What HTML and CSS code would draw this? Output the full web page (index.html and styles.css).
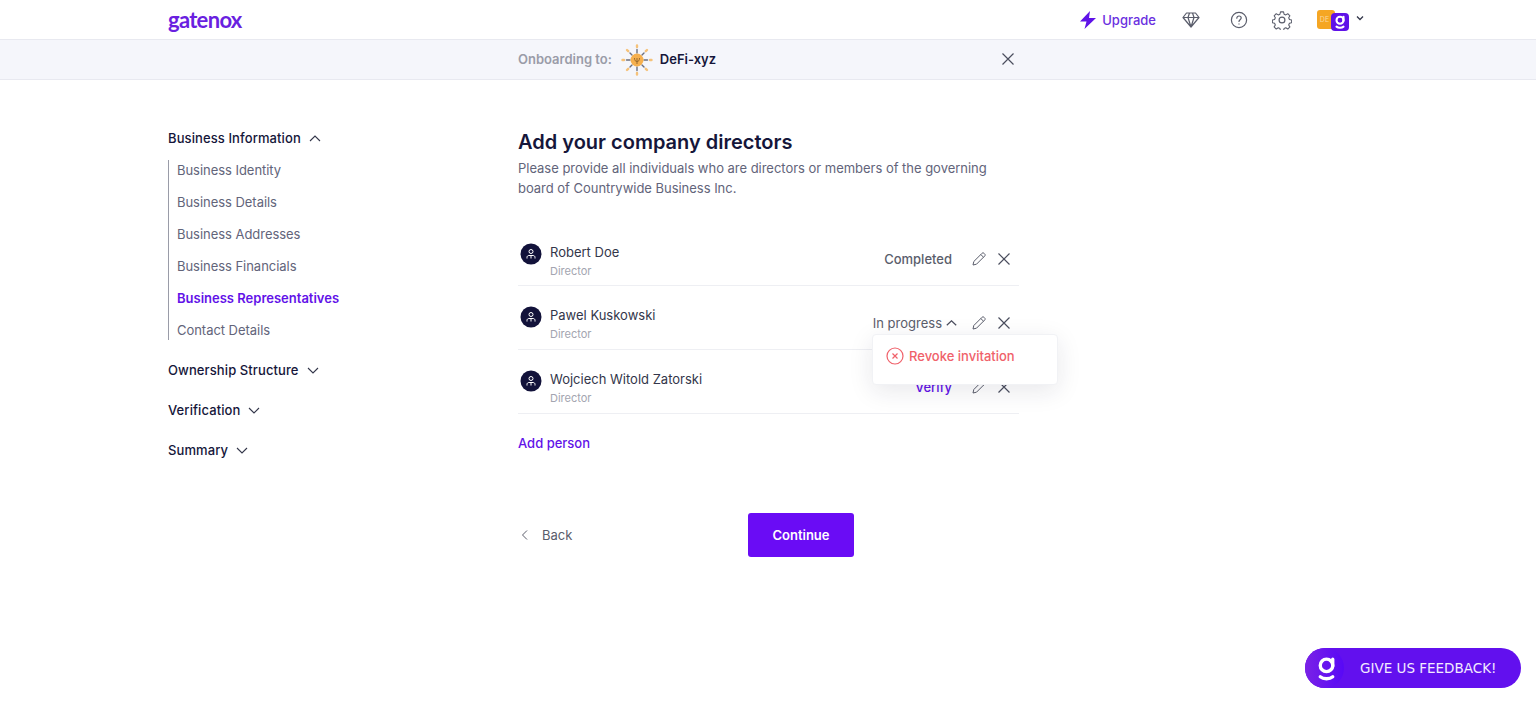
FILE: index.html
```html
<!DOCTYPE html>
<html lang="en">
<head>
  <meta charset="UTF-8">
  <meta name="viewport" content="width=device-width, initial-scale=1.0">
  <title>Gatenox onboarding</title>
  <link rel="stylesheet" href="styles.css">
</head>
<body>
  <header class="topbar">
    <div class="logo">gatenox</div>
    <nav class="topnav">
      <a class="upgrade">
        <svg width="18" height="20" viewBox="0 0 18 20"><path d="M11 1 1 11.500h6.500L5.500 19 17 8h-7z" fill="#5f12e8"/></svg>
        Upgrade
      </a>
      <svg class="nav-diamond" width="18" height="16" viewBox="0 0 18 16" fill="none" stroke="#5a5d6b" stroke-width="1.200" stroke-linejoin="round"><path d="M4.500 1h9L17 5.500 9 15 1 5.500zM1 5.500h16M6 5.500 9 15l3-9.500M6 5.500 7.500 1M12 5.500 10.500 1"/></svg>
      <svg class="nav-help" width="18" height="18" viewBox="0 0 18 18" fill="none" stroke="#5a5d6b" stroke-width="1.200"><circle cx="9" cy="9" r="7.600"/><path d="M6.800 7.200c0-1.300 1-2.200 2.200-2.200s2.200.9 2.200 2c0 1.700-2.200 1.800-2.200 3.500" stroke-linecap="round"/><path d="M9 12.500v1"/></svg>
      <svg class="nav-gear" width="20" height="20" viewBox="0 0 24 24" fill="none" stroke="#5a5d6b" stroke-width="1.400" stroke-linejoin="round"><circle cx="12" cy="12" r="3.500"/><path d="M10 1.500h4l.7 3 2.300 1 2.600-1.600 2.800 2.800-1.600 2.600 1 2.300 2.900.7v3.400l-2.900.7-1 2.300 1.600 2.600-2.800 2.800-2.600-1.600-2.300 1-.7 2.900h-4l-.7-2.900-2.300-1-2.600 1.600-2.800-2.800 1.600-2.600-1-2.300-2.900-.7v-3.400l2.900-.7 1-2.300-1.600-2.600 2.800-2.800 2.600 1.600 2.300-1z" transform="translate(1.100 .9) scale(.91)"/></svg>
      <div class="account">
        <div class="account-org">DE</div>
        <div class="account-me">
          <svg width="12" height="14" viewBox="0 0 20 24" fill="none" stroke="#fff" stroke-width="3.600" stroke-linecap="round"><circle cx="10" cy="9" r="6"/><path d="M16 3v7M4 20c3 2.500 9 2.500 12 0"/></svg>
        </div>
        <svg class="account-caret" width="8" height="6" viewBox="0 0 8 6" fill="none" stroke="#33364a" stroke-width="1.300"><path d="m1 1.500 3 3 3-3"/></svg>
      </div>
    </nav>
  </header>

  <div class="subbar">
    <div class="subbar-inner">
      <span class="onboarding-label">Onboarding to:</span>
      <svg class="defi-logo" width="32" height="32" viewBox="0 0 32 32">
        <g stroke="#f5c27a" stroke-width="2.400" stroke-linecap="round">
          <path d="M16 1.500v1.500M16 29v1.500M1.500 16H3M29 16h1.500M6 6l1.200 1.200M24.800 24.800 26 26M26 6l-1.200 1.200M6 26l1.200-1.200"/>
        </g>
        <g stroke="#6b6e7c" stroke-width="1.400" stroke-linecap="round">
          <path d="M16 5.500V9M16 23v3.500M5.500 16H9M23 16h3.500M9 9l2 2M21 21l2 2M23 9l-2 2M9 23l2-2"/>
        </g>
        <circle cx="16" cy="16" r="6.500" fill="#f6b04e"/>
        <path d="M13.500 14c0 2.500 1 3.500 2.500 3.500s2.500-1 2.500-3.500M16 14v6" stroke="#9a6a2c" stroke-width="1" fill="none"/>
      </svg>
      <span class="defi-name">DeFi-xyz</span>
      <svg class="subbar-close" width="12" height="12" viewBox="0 0 12 12" stroke="#4b4e5e" stroke-width="1.200"><path d="m.5.500 11 11M11.500.500l-11 11"/></svg>
    </div>
  </div>

  <main class="page">
    <aside class="sidebar">
      <div class="side-head">Business Information
        <svg width="12" height="7" viewBox="0 0 12 7" fill="none" stroke="#33364a" stroke-width="1.100"><path d="m1 6 5-5 5 5"/></svg>
      </div>
      <ul class="side-list">
        <li>Business Identity</li>
        <li>Business Details</li>
        <li>Business Addresses</li>
        <li>Business Financials</li>
        <li class="active">Business Representatives</li>
        <li>Contact Details</li>
      </ul>
      <div class="side-head">Ownership Structure
        <svg width="12" height="7" viewBox="0 0 12 7" fill="none" stroke="#33364a" stroke-width="1.100"><path d="m1 1 5 5 5-5"/></svg>
      </div>
      <div class="side-head">Verification
        <svg width="12" height="7" viewBox="0 0 12 7" fill="none" stroke="#33364a" stroke-width="1.100"><path d="m1 1 5 5 5-5"/></svg>
      </div>
      <div class="side-head">Summary
        <svg width="12" height="7" viewBox="0 0 12 7" fill="none" stroke="#33364a" stroke-width="1.100"><path d="m1 1 5 5 5-5"/></svg>
      </div>
    </aside>

    <section class="content">
      <h1>Add your company directors</h1>
      <p class="intro">Please provide all individuals who are directors or members of the governing board of Countrywide Business Inc.</p>

      <div class="people">
        <div class="person person-first">
          <svg class="avatar" width="22" height="22" viewBox="0 0 22 22"><circle cx="11" cy="11" r="10.500" fill="#12123a"/><g fill="none" stroke="#fff" stroke-width="1"><circle cx="11" cy="8.500" r="2"/><path d="M7 15.500v-1c0-1.500 1-2 2-2h4c1 0 2 .5 2 2v1M11 12.500v3"/></g></svg>
          <div class="person-text">
            <div class="person-name">Robert Doe</div>
            <div class="person-role">Director</div>
          </div>
          <span class="status">Completed</span>
          <svg class="edit" width="14" height="14" viewBox="0 0 14 14" fill="none" stroke="#5a5d6b" stroke-width="1"><path d="M1 13l.8-3.500L10 1.300c.6-.6 1.500-.6 2 0l.7.700c.6.6.6 1.400 0 2L4.500 12.200zM8.800 2.500l2.700 2.700"/></svg>
          <svg class="remove" width="12" height="12" viewBox="0 0 12 12" stroke="#4b4e5e" stroke-width="1.200"><path d="m.5.500 11 11M11.500.500l-11 11"/></svg>
        </div>

        <div class="person">
          <svg class="avatar" width="22" height="22" viewBox="0 0 22 22"><circle cx="11" cy="11" r="10.500" fill="#12123a"/><g fill="none" stroke="#fff" stroke-width="1"><circle cx="11" cy="8.500" r="2"/><path d="M7 15.500v-1c0-1.500 1-2 2-2h4c1 0 2 .5 2 2v1M11 12.500v3"/></g></svg>
          <div class="person-text">
            <div class="person-name">Pawel Kuskowski</div>
            <div class="person-role">Director</div>
          </div>
          <span class="status status-open">In progress
            <svg width="11" height="6" viewBox="0 0 11 6" fill="none" stroke="#4b4e5e" stroke-width="1.200"><path d="m.8 5.300 4.700-4.500 4.700 4.500"/></svg>
          </span>
          <svg class="edit" width="14" height="14" viewBox="0 0 14 14" fill="none" stroke="#5a5d6b" stroke-width="1"><path d="M1 13l.8-3.500L10 1.300c.6-.6 1.500-.6 2 0l.7.700c.6.6.6 1.400 0 2L4.500 12.200zM8.800 2.500l2.700 2.700"/></svg>
          <svg class="remove" width="12" height="12" viewBox="0 0 12 12" stroke="#4b4e5e" stroke-width="1.200"><path d="m.5.500 11 11M11.500.500l-11 11"/></svg>
          <div class="popup">
            <svg width="18" height="18" viewBox="0 0 18 18" fill="none" stroke="#f0616a" stroke-width="1.200"><circle cx="9" cy="9" r="8"/><path d="m6.500 6.500 5 5M11.500 6.500l-5 5"/></svg>
            Revoke invitation
          </div>
        </div>

        <div class="person">
          <svg class="avatar" width="22" height="22" viewBox="0 0 22 22"><circle cx="11" cy="11" r="10.500" fill="#12123a"/><g fill="none" stroke="#fff" stroke-width="1"><circle cx="11" cy="8.500" r="2"/><path d="M7 15.500v-1c0-1.500 1-2 2-2h4c1 0 2 .5 2 2v1M11 12.500v3"/></g></svg>
          <div class="person-text">
            <div class="person-name">Wojciech Witold Zatorski</div>
            <div class="person-role">Director</div>
          </div>
          <span class="status status-verify">Verify</span>
          <svg class="edit" width="14" height="14" viewBox="0 0 14 14" fill="none" stroke="#5a5d6b" stroke-width="1"><path d="M1 13l.8-3.500L10 1.300c.6-.6 1.500-.6 2 0l.7.700c.6.6.6 1.400 0 2L4.500 12.200zM8.800 2.500l2.700 2.700"/></svg>
          <svg class="remove" width="12" height="12" viewBox="0 0 12 12" stroke="#4b4e5e" stroke-width="1.200"><path d="m.5.500 11 11M11.500.500l-11 11"/></svg>
        </div>
      </div>

      <a class="add-person">Add person</a>

      <div class="actions">
        <a class="back">
          <svg width="7" height="10" viewBox="0 0 7 10" fill="none" stroke="#5a5d6b" stroke-width="1"><path d="M6 .5 1.500 5 6 9.500"/></svg>
          Back
        </a>
        <button class="continue">Continue</button>
      </div>
    </section>
  </main>

  <button class="feedback">
    <span class="feedback-logo">
      <svg width="21" height="25" viewBox="0 0 20 24" fill="none" stroke="#fff" stroke-width="3.200" stroke-linecap="round"><circle cx="10" cy="9" r="6"/><path d="M16 3v7M4 20c3 2.500 9 2.500 12 0"/></svg>
    </span>
    GIVE US FEEDBACK!
  </button>
</body>
</html>
```

FILE: styles.css
```css
* {
  margin: 0;
  padding: 0;
  box-sizing: border-box;
}
body {
  font-family: Inter, "Liberation Sans", sans-serif;
  font-size: 13px;
  color: #15163a;
  background: #ffffff;
  height: 703px;
  overflow: hidden;
  position: relative;
}
.topbar {
  height: 40px;
  border-bottom: 1px solid #e8e9f0;
  padding: 0 171px 0 168px;
  display: flex;
  align-items: center;
  justify-content: space-between;
}
.logo {
  font-family: Lato, sans-serif;
  font-size: 22px;
  font-weight: 700;
  letter-spacing: -0.7px;
  color: #6a1fe0;
  line-height: 40px;
}
.topnav {
  display: flex;
  align-items: center;
}
.upgrade {
  display: flex;
  align-items: center;
  gap: 5px;
  color: #6a2fe0;
  font-weight: 500;
}
.nav-diamond {
  margin-left: 26px;
}
.nav-help {
  margin-left: 30px;
}
.nav-gear {
  margin-left: 24px;
}
.account {
  margin-left: 25px;
  width: 48px;
  height: 24px;
  position: relative;
}
.account-org {
  position: absolute;
  left: 0;
  top: 2px;
  width: 18px;
  height: 19px;
  border-radius: 3px;
  background: #f5a623;
  color: #fbd9a0;
  font-size: 7px;
  line-height: 19px;
  padding-right: 3px;
  text-align: center;
}
.account-me {
  position: absolute;
  left: 14px;
  top: 5px;
  width: 18px;
  height: 18px;
  border-radius: 4px;
  background: #5f12e8;
  display: flex;
  align-items: center;
  justify-content: center;
}
.account-caret {
  position: absolute;
  left: 39px;
  top: 7px;
}
.subbar {
  height: 40px;
  background: #f5f6fb;
  border-bottom: 1px solid #e8e9f0;
  padding-left: 518px;
}
.subbar-inner {
  width: 496px;
  height: 38px;
  display: flex;
  align-items: center;
}
.onboarding-label {
  color: #9a9ca8;
  font-weight: 600;
}
.defi-logo {
  margin-left: 9px;
  margin-top: 2px;
}
.defi-name {
  margin-left: 7px;
  font-weight: 600;
}
.subbar-close {
  margin-left: auto;
}
.page {
  display: flex;
  padding: 50px 0 0 168px;
}
.sidebar {
  width: 350px;
}
.side-head {
  height: 16px;
  line-height: 16px;
  font-weight: 500;
  letter-spacing: 0.1px;
  margin-bottom: 24px;
  color: #15163a;
  display: flex;
  align-items: center;
  gap: 8px;
}
.side-list {
  display: flow-root;
  list-style: none;
  border-left: 1px solid #9a9ca8;
  height: 180px;
  margin: -10px 0 22px 0;
  padding-left: 8px;
}
.side-list li {
  height: 32px;
  line-height: 32px;
  color: #62647a;
  letter-spacing: -0.04px;
}
.side-list li:first-child {
  margin-top: -6px;
}
.side-list .active {
  color: #6212e8;
  font-weight: 600;
  letter-spacing: 0;
}
.content {
  width: 501px;
}
h1 {
  font-size: 20px;
  font-weight: 600;
  line-height: 24px;
  color: #15163a;
}
.intro {
  margin-top: 4px;
  line-height: 20px;
  color: #62647a;
  letter-spacing: -0.025px;
  width: 480px;
}
.people {
  margin-top: 25px;
}
.person {
  height: 64px;
  border-bottom: 1px solid #eeeff3;
  display: flex;
  align-items: center;
  position: relative;
  padding: 10px 9px 0 2px;
}
.person-first {
  height: 63px;
}
.avatar {
  margin-top: -11px;
  flex: none;
}
.person-text {
  margin-left: 8px;
  margin-top: 3px;
  flex: 1;
}
.person-name {
  line-height: 18px;
  color: #33364a;
}
.person-role {
  margin-top: 2px;
  font-size: 11px;
  line-height: 16px;
  color: #a3a5b0;
}
.status {
  color: #5a5d6b;
  font-weight: 500;
}
.status-open {
  display: flex;
  align-items: center;
  gap: 4px;
  margin-right: -5px;
  font-weight: 400;
}
.status-verify {
  color: #6212e8;
  font-weight: 500;
}
.edit {
  margin-left: 20px;
}
.remove {
  margin-left: 12px;
}
.popup {
  position: absolute;
  left: 354px;
  top: 48px;
  width: 186px;
  height: 51px;
  background: #ffffff;
  border: 1px solid #f1f2f5;
  border-radius: 4px;
  box-shadow: 0 6px 24px rgba(30, 30, 60, 0.1);
  color: #f0616a;
  display: flex;
  align-items: center;
  gap: 5px;
  padding: 0 0 7px 13px;
  font-weight: 500;
  z-index: 2;
}
.add-person {
  display: block;
  margin-top: 21px;
  line-height: 16px;
  color: #6212e8;
  font-weight: 500;
}
.actions {
  display: flex;
  align-items: center;
  margin-top: 62px;
  padding-left: 3px;
}
.back {
  display: flex;
  align-items: center;
  gap: 14px;
  width: 227px;
  color: #5a5d6b;
}
.continue {
  width: 106px;
  height: 44px;
  border: none;
  border-radius: 3px;
  background: #6a0cf5;
  color: #ffffff;
  font-family: inherit;
  font-size: 13px;
  font-weight: 600;
}
.feedback {
  position: absolute;
  left: 1305px;
  top: 648px;
  width: 216px;
  height: 40px;
  border: none;
  border-radius: 20px;
  background: #6210ee;
  color: #f2eaff;
  font-family: "DejaVu Sans", sans-serif;
  font-size: 13.5px;
  display: flex;
  align-items: center;
  gap: 16px;
}
.feedback-logo {
  width: 39px;
  height: 40px;
  border-radius: 50%;
  background: linear-gradient(90deg, #7a22e6, #5808f6);
  display: flex;
  align-items: center;
  justify-content: center;
  padding-left: 4px;
}
```
